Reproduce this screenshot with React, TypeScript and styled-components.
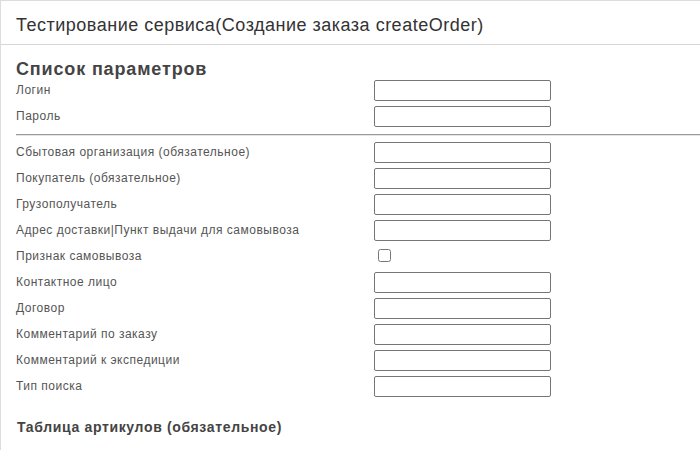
import React from "react";
import styled, { createGlobalStyle } from "styled-components";

const Global = createGlobalStyle`
  html, body { margin: 0; padding: 0; background: #fff; }
  body { font-family: "Liberation Sans", Arial, sans-serif; }
`;

const Panel = styled.div`
  border-top: 1px solid #dcdcdc;
  border-left: 1px solid #dcdcdc;
  background: #fff;
  min-height: 449px;
`;

const Header = styled.div`
  height: 44px;
  box-sizing: border-box;
  padding: 14px 0 0 15px;
  border-bottom: 1px solid #d6d6d6;
  font-size: 18px;
  letter-spacing: 0.5px;
  color: #333;
  white-space: nowrap;
`;

const Body = styled.div`
  padding: 14px 0 0 15px;
`;

const Heading = styled.h2`
  margin: 0;
  font-size: 18px;
  font-weight: bold;
  letter-spacing: 0.85px;
  color: #444;
  line-height: normal;
`;

const Row = styled.div`
  display: grid;
  grid-template-columns: 358px 177px;
  height: 26px;
  align-items: start;
`;

const Label = styled.label`
  font-size: 12px;
  line-height: 21px;
  letter-spacing: 0.5px;
  color: #555;
  white-space: nowrap;
`;

const TextInput = styled.input`
  box-sizing: border-box;
  width: 177px;
  height: 21px;
  margin: 0;
  padding: 1px 2px;
  border: 1px solid #767676;
  border-radius: 2px;
  background: #fff;
  font-family: inherit;
  font-size: 12px;
`;

const Check = styled.input`
  width: 13px;
  height: 13px;
  margin: 3px 0 0 4px;
`;

const Divider = styled.div`
  margin: 2px 0 6px;
  border-top: 1px solid #9a9a9a;
  border-bottom: 1px solid #e4e4e4;
`;

const SubHeading = styled.h3`
  margin: 17px 0 0 1px;
  font-size: 14px;
  font-weight: bold;
  letter-spacing: 0.65px;
  color: #444;
  line-height: normal;
`;

type Field = { label: string; kind?: "text" | "check" };

const auth: Field[] = [{ label: "Логин" }, { label: "Пароль" }];

const fields: Field[] = [
  { label: "Сбытовая организация (обязательное)" },
  { label: "Покупатель (обязательное)" },
  { label: "Грузополучатель" },
  { label: "Адрес доставки|Пункт выдачи для самовывоза" },
  { label: "Признак самовывоза", kind: "check" },
  { label: "Контактное лицо" },
  { label: "Договор" },
  { label: "Комментарий по заказу" },
  { label: "Комментарий к экспедиции" },
  { label: "Тип поиска" },
];

const FieldRow = ({ f }: { f: Field }) => (
  <Row>
    <Label>{f.label}</Label>
    {f.kind === "check" ? (
      <div>
        <Check type="checkbox" />
      </div>
    ) : (
      <TextInput type="text" />
    )}
  </Row>
);

export default function App() {
  return (
    <>
      <Global />
      <Panel>
        <Header>Тестирование сервиса(Создание заказа createOrder)</Header>
        <Body>
          <Heading>Список параметров</Heading>
          {auth.map((f) => (
            <FieldRow key={f.label} f={f} />
          ))}
          <Divider />
          {fields.map((f) => (
            <FieldRow key={f.label} f={f} />
          ))}
          <SubHeading>Таблица артикулов (обязательное)</SubHeading>
        </Body>
      </Panel>
    </>
  );
}
